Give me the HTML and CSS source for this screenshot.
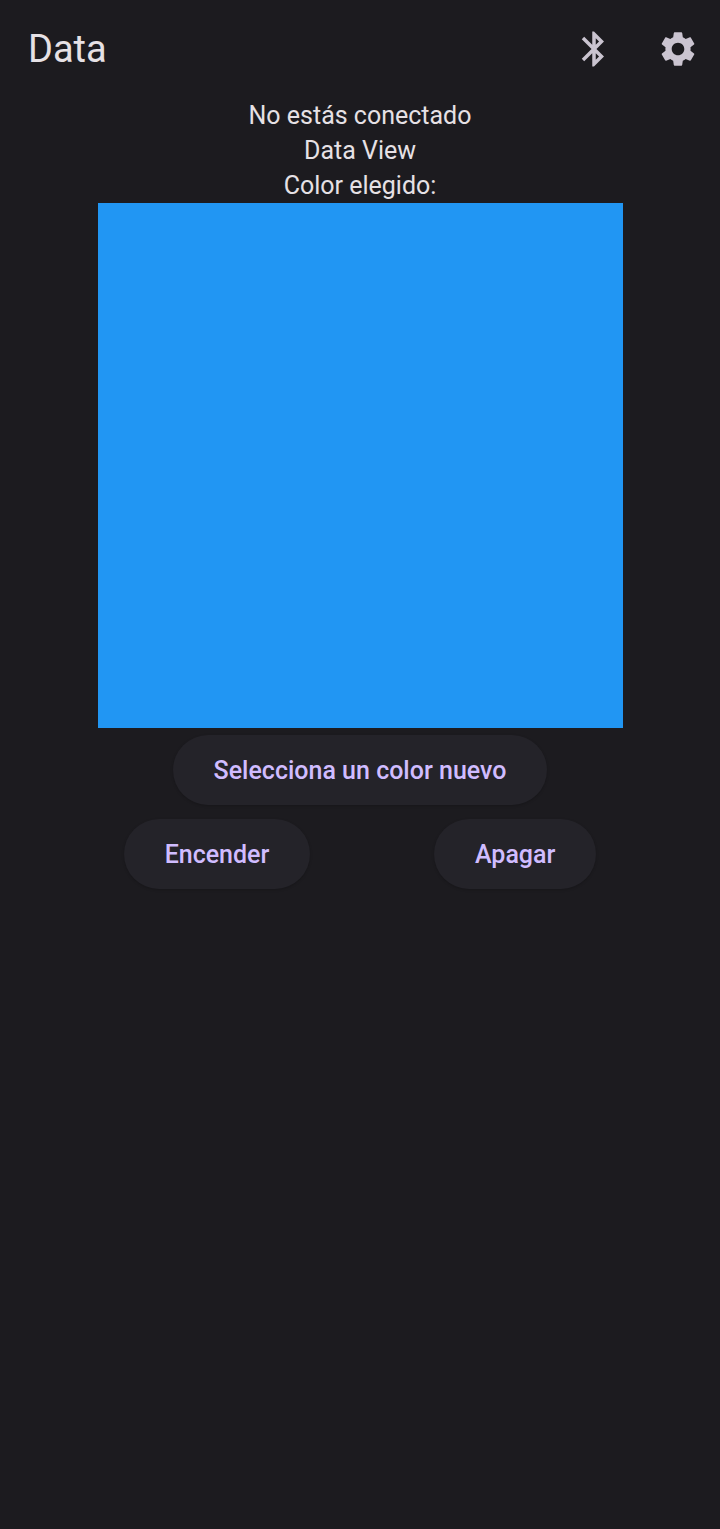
FILE: index.html
```html
<!DOCTYPE html>
<html lang="es">
<head>
<meta charset="utf-8">
<meta name="viewport" content="width=device-width, initial-scale=1">
<title>Data</title>
<link rel="stylesheet" href="styles.css">
</head>
<body>
<header class="app-bar">
  <h1 class="title">Data</h1>
  <div class="actions">
    <button class="icon-button" type="button" aria-label="Bluetooth">
      <svg class="icon" viewBox="0 0 24 24" aria-hidden="true"><path d="M17.71 7.71 12 2h-1v7.59L6.41 5 5 6.41 10.59 12 5 17.59 6.41 19 11 14.41V22h1l5.71-5.71-4.3-4.29 4.3-4.29zM13 5.83l1.88 1.88L13 9.59V5.83zm1.88 10.46L13 18.17v-3.76l1.88 1.88z"/></svg>
    </button>
    <button class="icon-button" type="button" aria-label="Ajustes">
      <svg class="icon" viewBox="0 0 24 24" aria-hidden="true"><path d="M19.14 12.94c.04-.3.06-.61.06-.94 0-.32-.02-.64-.07-.94l2.03-1.58c.18-.14.23-.41.12-.61l-1.92-3.32c-.12-.22-.37-.29-.59-.22l-2.39.96c-.5-.38-1.03-.7-1.62-.94l-.36-2.54c-.04-.24-.24-.41-.48-.41h-3.84c-.24 0-.43.17-.47.41l-.36 2.54c-.59.24-1.13.57-1.62.94l-2.39-.96c-.22-.08-.47 0-.59.22L2.74 8.87c-.12.21-.08.47.12.61l2.03 1.58c-.05.3-.09.63-.09.94s.02.64.07.94l-2.03 1.58c-.18.14-.23.41-.12.61l1.92 3.32c.12.22.37.29.59.22l2.39-.96c.5.38 1.03.7 1.62.94l.36 2.54c.05.24.24.41.48.41h3.84c.24 0 .44-.17.47-.41l.36-2.54c.59-.24 1.13-.56 1.62-.94l2.39.96c.22.08.47 0 .59-.22l1.92-3.32c.12-.22.07-.47-.12-.61l-2.01-1.58zM12 15.6c-1.98 0-3.6-1.62-3.6-3.6s1.62-3.6 3.6-3.6 3.6 1.62 3.6 3.6-1.62 3.6-3.6 3.6z"/></svg>
    </button>
  </div>
</header>
<main class="content">
  <p class="line">No estás conectado</p>
  <p class="line">Data View</p>
  <p class="line">Color elegido:</p>
  <div class="swatch" role="img" aria-label="Azul"></div>
  <button class="button" type="button">Selecciona un color nuevo</button>
  <div class="button-row">
    <button class="button" type="button">Encender</button>
    <button class="button" type="button">Apagar</button>
  </div>
</main>
</body>
</html>
```
FILE: styles.css
```css
body {
  margin: 0;
  min-height: 100vh;
  background: #1c1b1f;
  color: #e6e1e5;
  font-family: Roboto, sans-serif;
}

.app-bar {
  display: flex;
  align-items: center;
  justify-content: space-between;
  height: 98px;
  padding: 0 0 0 28px;
}

.title {
  margin: 0;
  font-size: 38px;
  line-height: 48px;
  font-weight: 400;
}

.actions {
  display: flex;
}

.icon-button {
  display: flex;
  align-items: center;
  justify-content: center;
  width: 84px;
  height: 84px;
  padding: 0;
  border: 0;
  background: none;
  color: #cac4d0;
}

.icon {
  width: 42px;
  height: 42px;
  fill: currentColor;
}

.content {
  display: flex;
  flex-direction: column;
  align-items: center;
}

.line {
  margin: 0;
  font-size: 25px;
  line-height: 35px;
}

.swatch {
  width: min(525px, 100%);
  aspect-ratio: 1;
  margin-bottom: 7px;
  background: #2196f3;
}

.button {
  height: 70px;
  padding: 0 41px;
  border: 0;
  border-radius: 35px;
  background: #242329;
  box-shadow: 0 1px 3px rgba(0, 0, 0, 0.2);
  color: #d0bcff;
  font: 500 25px/35px Roboto, sans-serif;
}

.button-row {
  display: flex;
  justify-content: space-evenly;
  width: 100%;
  margin-top: 14px;
}
```
